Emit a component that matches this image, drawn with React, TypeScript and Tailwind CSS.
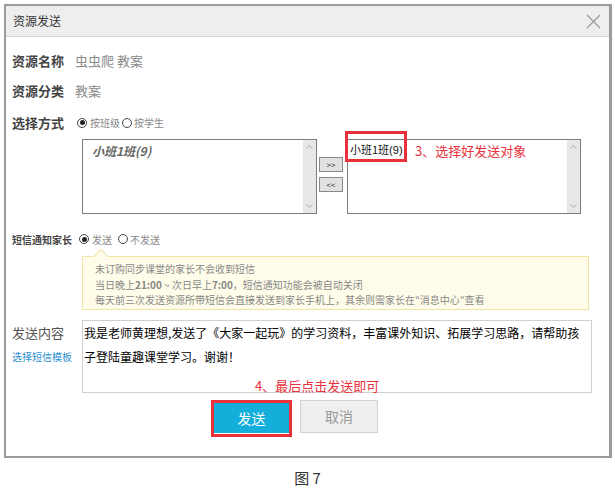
import React from 'react'

const FONT = { fontFamily: '"Noto Sans CJK SC", "Liberation Sans", sans-serif' }

function Radio({ checked }: { checked?: boolean }) {
  return (
    <span className="w-[10px] h-[10px] rounded-full border border-[#444] bg-white flex items-center justify-center shrink-0">
      {checked && <span className="w-[5px] h-[5px] rounded-full bg-[#222]" />}
    </span>
  )
}

function Chevron({ up }: { up?: boolean }) {
  return (
    <svg width="7" height="4" viewBox="0 0 7 4" fill="none">
      <polyline
        points={up ? '0.5,3.5 3.5,0.5 6.5,3.5' : '0.5,0.5 3.5,3.5 6.5,0.5'}
        stroke="#a8a8a8"
        strokeWidth="1"
      />
    </svg>
  )
}

function ListBox({ children, width }: { children?: React.ReactNode; width: string }) {
  return (
    <div className={`${width} h-[75px] border border-[#7d7d7d] bg-white flex relative`}>
      <div className="flex-1">{children}</div>
      <div className="w-[13px] bg-[#e8e8e8] flex flex-col items-center justify-between py-[5px]">
        <Chevron up />
        <Chevron />
      </div>
    </div>
  )
}

export default function App() {
  return (
    <div className="w-[615px] h-[494px] bg-white overflow-hidden" style={FONT}>
      <div className="ml-[4px] mt-[4px] w-[608px] h-[454px] border-t-2 border-l-2 border-b-2 border-r-[3px] border-[#9b9b9b] bg-white">
        {/* Header */}
        <div className="h-[31px] bg-[#eeeeee] border-b border-[#d6d6d6] flex items-center justify-between pl-[7px] pr-[8px]">
          <span className="text-[12px] text-[#333] leading-none">资源发送</span>
          <svg width="15" height="15" viewBox="0 0 15 15">
            <line x1="1" y1="1" x2="14" y2="14" stroke="#a0a0a0" strokeWidth="1.4" />
            <line x1="14" y1="1" x2="1" y2="14" stroke="#a0a0a0" strokeWidth="1.4" />
          </svg>
        </div>

        {/* Body */}
        <div className="pl-[6px] pt-[9px]">
          <div className="h-[30px] flex items-center">
            <span className="w-[63px] text-[13px] font-bold text-[#444]">资源名称</span>
            <span className="text-[13px] text-[#8a8a8a]">虫虫爬 教案</span>
          </div>
          <div className="h-[30px] flex items-center">
            <span className="w-[63px] text-[13px] font-bold text-[#444]">资源分类</span>
            <span className="text-[13px] text-[#8a8a8a]">教案</span>
          </div>
          <div className="h-[30px] flex items-center pt-[3px]">
            <span className="w-[65px] text-[13px] font-bold text-[#444]">选择方式</span>
            <Radio checked />
            <span className="ml-[3px] text-[10px] text-[#888]">按班级</span>
            <span className="ml-[2px]"><Radio /></span>
            <span className="ml-[2px] text-[10px] text-[#888]">按学生</span>
          </div>

          {/* Lists */}
          <div className="ml-[70px] mt-[3px] flex">
            <ListBox width="w-[235px]">
              <div className="pl-[9px] pt-[3px] text-[12px] italic font-bold text-[#666] leading-[16px]">小班1班(9)</div>
            </ListBox>
            <div className="ml-[2px] w-[24px] pt-[18px] flex flex-col gap-[5px]">
              <button className="h-[15px] w-[24px] border border-[#8a8a8a] bg-[#e1e1e1] text-[8px] leading-none text-[#222]">&gt;&gt;</button>
              <button className="h-[15px] w-[24px] border border-[#8a8a8a] bg-[#e1e1e1] text-[8px] leading-none text-[#222]">&lt;&lt;</button>
            </div>
            <div className="ml-[4px]">
              <ListBox width="w-[234px]">
                <div className="pl-[2px] pt-[1px] text-[11px] text-[#111] leading-[16px] whitespace-nowrap">
                  小班1班<span style={{ fontFamily: '"Liberation Sans", sans-serif' }}>(9)</span>
                </div>
                <div className="absolute left-[-3px] top-[-9px] w-[62px] h-[31px] border-[3px] border-[#e8313a]" />
                <div className="absolute left-[67px] top-[2px] text-[13px] text-[#e8313a] leading-[18px]">3、选择好发送对象</div>
              </ListBox>
            </div>
          </div>

          {/* SMS */}
          <div className="mt-[15px] h-[20px] flex items-center">
            <span className="w-[67px] text-[10px] font-bold text-[#444]">短信通知家长</span>
            <Radio checked />
            <span className="ml-[3px] text-[10px] text-[#888]">发送</span>
            <span className="ml-[6px]"><Radio /></span>
            <span className="ml-[2px] text-[10px] text-[#888]">不发送</span>
          </div>
          <div className="mt-[7px] ml-[70px] w-[507px] h-[54px] border border-[#f1e3a6] bg-[#fffdea] relative pl-[12px] pt-[4px] text-[10px] leading-[15.5px] text-[#888]">
            <div className="absolute left-[13px] top-[-6px] w-[10px] h-[10px] rotate-45 border-l border-t border-[#f1e3a6] bg-[#fffdea]" />
            <div className="relative">未订购同步课堂的家长不会收到短信</div>
            <div className="relative">当日晚上<b>21:00</b> ~ 次日早上<b>7:00</b>，短信通知功能会被自动关闭</div>
            <div className="relative">每天前三次发送资源所带短信会直接发送到家长手机上，其余则需家长在"消息中心"查看</div>
          </div>

          {/* Content */}
          <div className="mt-[10px] flex">
            <div className="w-[70px] pt-[1px]">
              <div className="text-[13px] text-[#555] leading-[24px]">发送内容</div>
              <div className="text-[10px] text-[#2a8fd0] leading-[24px]">选择短信模板</div>
            </div>
            <div className="w-[510px] h-[73px] border border-[#d0d0d0] relative pl-[1px] text-[12px] text-black leading-[24px]">
              我是老师黄理想,发送了《大家一起玩》的学习资料，丰富课外知识、拓展学习思路，请帮助孩
              <br />
              子登陆童趣课堂学习。谢谢！
              <div className="absolute left-[172px] top-[58px] text-[13px] text-[#e8313a] leading-[14px] whitespace-nowrap">4、最后点击发送即可</div>
            </div>
          </div>

          {/* Buttons */}
          <div className="mt-[7px] ml-[199px] flex items-start">
            <div className="border-[3px] border-[#e8313a] bg-white pb-[1px]">
              <button className="w-[75px] h-[30px] bg-[#14aedb] text-white text-[14px] flex items-center justify-center">发送</button>
            </div>
            <button className="ml-[8px] w-[78px] h-[33px] bg-[#efefef] border border-[#d2d2d2] text-[#999] text-[14px] flex items-center justify-center">取消</button>
          </div>
        </div>
      </div>
      <div className="mt-[11px] text-center text-[15px] font-normal text-[#333] leading-[18px]">图 7</div>
    </div>
  )
}
